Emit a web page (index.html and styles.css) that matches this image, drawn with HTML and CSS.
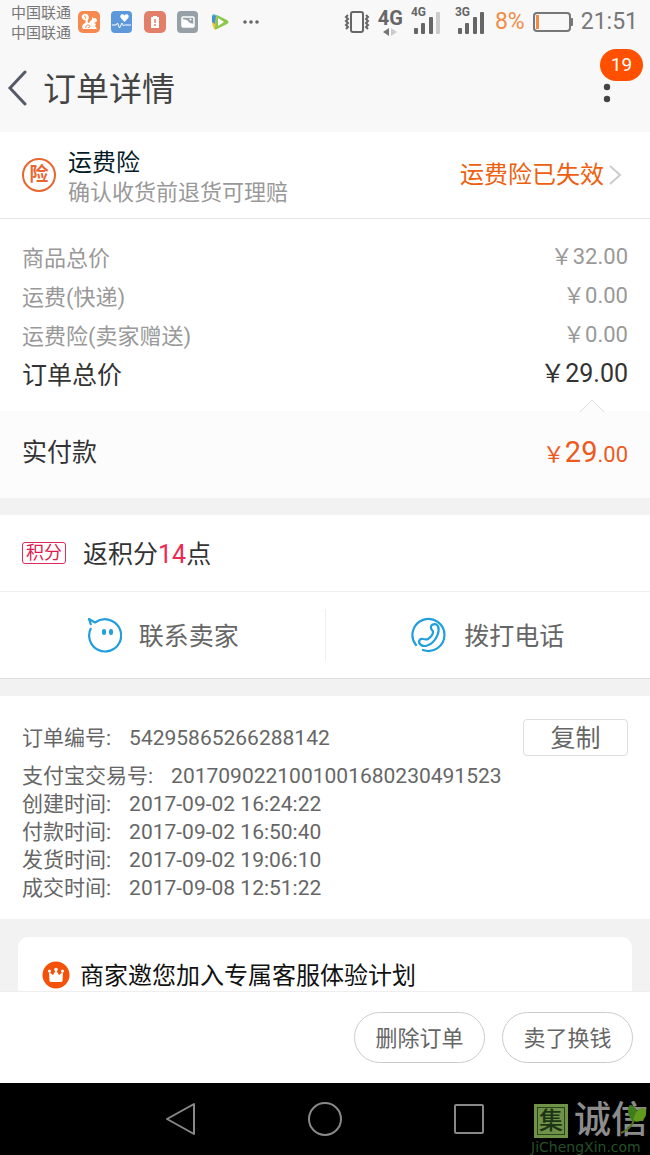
FILE: index.html
```html
<!DOCTYPE html>
<html lang="zh-CN">
<head>
    <meta charset="UTF-8">
    <meta name="viewport" content="width=device-width, initial-scale=1.0">
    <title>订单详情</title>
    <link rel="stylesheet" href="styles.css">
</head>
<body>
    <div class="status-bar">
        <div class="carriers">
            <span>中国联通</span>
            <span>中国联通</span>
        </div>
        <div class="app-icons">
            <svg width="22" height="22" viewBox="0 0 22 22">
                <rect width="22" height="22" rx="5" fill="#f7894e"/>
                <path d="M5 18c-2-3 0-5 2-6 2-2 0-3-1-3-3-1-3-5 0-6 4-1 6 3 4 6-1 2 0 3 1 3 1-2 2-3 3-3V6l2 1.500 1-.5c2 1 3 3 1 4l-2 1 2 1-1 2 2 3z" fill="#fff"/>
                <path d="M6 5c2 0 2 2 1 3" fill="none" stroke="#f7894e"/>
                <path d="M8 17c-1-3 3-4 4-2 0 2-2 2-2 1" fill="none" stroke="#f7894e"/>
            </svg>
            <svg width="22" height="22" viewBox="0 0 22 22">
                <rect width="21" height="22" rx="4" fill="#5c98da"/>
                <path d="M13.500 11 9.800 7C8 4 12 2 13.500 4.500 15 2 19 4 17.200 7z" fill="#fff"/>
                <path d="M1 14h4l1.500-2 2 5 2.500-5 1.500 3 1-1H20" fill="none" stroke="#fff"/>
            </svg>
            <svg width="22" height="22" viewBox="0 0 22 22">
                <rect width="22" height="22" rx="5" fill="#e37f69"/>
                <path d="M9 5h4v1h2v11H7V6h2z" fill="#fff"/>
                <path d="M11 8v4m0 1v2" stroke="#e37f69" stroke-width="1.500"/>
            </svg>
            <svg width="22" height="22" viewBox="0 0 22 22">
                <rect width="21" height="22" rx="4" fill="#96a0a6"/>
                <rect x="5" y="6" width="12" height="10" rx="1" fill="none" stroke="#fff" stroke-width="1.500"/>
                <path d="M5 8l5 1 3 3 4 1v3H5z" fill="#fff"/>
                <circle cx="13.500" cy="8.500" r="1" fill="#fff"/>
            </svg>
            <svg width="22" height="22" viewBox="0 0 22 22">
                <path d="M2 5q0-3 4-1l11 6-9 1z" fill="#4fb8d8"/>
                <path d="M2 5q2-1 5 1v11q-1 3-3 1-3-6-2-13z" fill="#f3c53b"/>
                <path d="M2 5q2-1 4 0l-1 8-3-2z" fill="#3f93d8"/>
                <path d="M7 4l10 5q3 2 0 4L7 18q-3 1-2-2z" fill="#8cc84b"/>
                <path d="M8 7v8l6-4z" fill="#fff"/>
            </svg>
            <svg class="dots" width="22" height="22" viewBox="0 0 22 22">
                <g fill="#666"><circle cx="5" cy="11" r="1.800"/><circle cx="11" cy="11" r="1.800"/><circle cx="17" cy="11" r="1.800"/></g>
            </svg>
        </div>
        <div class="system-icons">
            <svg width="26" height="24" viewBox="0 0 26 24" fill="none" stroke="#666">
                <rect x="7" y="2" width="12" height="20" rx="2" stroke-width="2"/>
                <path d="M4 5 2 7l2 2-2 2 2 2-2 2 2 2-2 2M22 5l2 2-2 2 2 2-2 2 2 2-2 2 2 2" stroke-width="2"/>
            </svg>
            <div class="network">
                <b>4G</b>
                <svg width="14" height="8" viewBox="0 0 14 8"><path d="M6 0v8L0 4z" fill="#777"/><path d="M8 0v8l6-4z" fill="#ccc"/></svg>
            </div>
            <div class="signal">
                <b>4G</b>
                <svg width="30" height="24" viewBox="0 0 30 24" fill="#666">
                    <rect x="3" y="18" width="4" height="6" rx="1"/><rect x="10" y="13" width="4" height="11" rx="1"/><rect x="18" y="7" width="4" height="17" rx="1"/><rect x="25" y="2" width="4" height="22" rx="1" fill="#ccc"/>
                </svg>
            </div>
            <div class="signal">
                <b>3G</b>
                <svg width="30" height="24" viewBox="0 0 30 24" fill="#666">
                    <rect x="3" y="18" width="4" height="6" rx="1"/><rect x="10" y="13" width="4" height="11" rx="1"/><rect x="18" y="7" width="4" height="17" rx="1"/><rect x="25" y="2" width="4" height="22" rx="1"/>
                </svg>
            </div>
            <span class="battery-level">8%</span>
            <svg width="40" height="20" viewBox="0 0 40 20">
                <rect x="1" y="1" width="36" height="18" rx="3" fill="none" stroke="#777" stroke-width="2"/>
                <rect x="37" y="6" width="3" height="8" rx="1" fill="#777"/>
                <rect x="3" y="3" width="3" height="14" fill="#f08c46"/>
            </svg>
            <span class="clock">21:51</span>
        </div>
    </div>

    <header class="title-bar">
        <button class="back" aria-label="返回">
            <svg width="22" height="36" viewBox="0 0 22 36"><path d="M19 2 4 18l15 16" fill="none" stroke="#555a68" stroke-width="3" stroke-linecap="round"/></svg>
        </button>
        <h1>订单详情</h1>
        <button class="more" aria-label="更多">
            <svg width="8" height="20" viewBox="0 0 8 20" fill="#444"><circle cx="4" cy="4" r="3.200"/><circle cx="4" cy="16" r="3.200"/></svg>
            <span class="badge">19</span>
        </button>
    </header>

    <main>
        <section class="insurance">
            <span class="insurance-icon">险</span>
            <div class="insurance-text">
                <h2>运费险</h2>
                <p>确认收货前退货可理赔</p>
            </div>
            <a class="insurance-state" href="#">运费险已失效
                <svg width="14" height="22" viewBox="0 0 14 22"><path d="M2 2l10 9-10 9" fill="none" stroke="#ccc" stroke-width="2"/></svg>
            </a>
        </section>

        <dl class="prices">
            <div><dt>商品总价</dt><dd>￥32.00</dd></div>
            <div><dt>运费(快递)</dt><dd>￥0.00</dd></div>
            <div><dt>运费险(卖家赠送)</dt><dd>￥0.00</dd></div>
            <div class="total"><dt>订单总价</dt><dd>￥29.00</dd></div>
        </dl>
        <section class="paid">
            <svg class="paid-arrow" width="26" height="13" viewBox="0 0 26 13"><path d="M1 13 13 1l12 12" fill="#fcfcfc" stroke="#ddd"/></svg>
            <span>实付款</span>
            <span class="paid-price">￥<strong>29</strong>.00</span>
        </section>

        <section class="points">
            <span class="points-tag">积分</span>
            <span class="points-text">返积分<em>14</em>点</span>
        </section>
        <div class="contact">
            <button>
                <svg width="36" height="36" viewBox="0 0 36 36" fill="none" stroke="#219fdd" stroke-width="2.200" stroke-linejoin="round">
                    <path d="M5 8 3 2l6 3.500C14 2 20 1 26 4a16 16 0 1 1-21 7"/>
                    <path d="M18 14v2M25 14v2" stroke-width="4" stroke-linecap="round"/>
                </svg>
                <span>联系卖家</span>
            </button>
            <button>
                <svg width="36" height="36" viewBox="0 0 36 36" fill="none" stroke="#219fdd" stroke-width="2.200" stroke-linecap="round" stroke-linejoin="round">
                    <path d="M5 28A16 16 0 1 1 12 33"/>
                    <path d="M20 11c-1-4 5-5 7-2 2 5-1 12-5 16-4 4-9 5-12 3-4-3-1-7 2-6 2 0 3 1 5 0 3-2 5-4 5-7 0-2-2-2-2-4z"/>
                </svg>
                <span>拨打电话</span>
            </button>
        </div>

        <section class="order-info">
            <div class="order-number">
                <span class="info-label">订单编号:</span>
                <span>54295865266288142</span>
                <button class="copy">复制</button>
            </div>
            <dl>
                <div><dt>支付宝交易号:</dt><dd>2017090221001001680230491523</dd></div>
                <div><dt>创建时间:</dt><dd>2017-09-02 16:24:22</dd></div>
                <div><dt>付款时间:</dt><dd>2017-09-02 16:50:40</dd></div>
                <div><dt>发货时间:</dt><dd>2017-09-02 19:06:10</dd></div>
                <div><dt>成交时间:</dt><dd>2017-09-08 12:51:22</dd></div>
            </dl>
        </section>

        <section class="invite">
            <svg width="28" height="28" viewBox="0 0 28 28">
                <circle cx="14" cy="14" r="13.500" fill="#f4510b"/>
                <path d="M7.500 20 7 11l4 3 3-5 3 5 4-3-.5 9q-.5 1-1.500 1H9q-1 0-1.500-1z" fill="#fff"/>
                <g fill="#fff"><circle cx="7.500" cy="10" r="1.600"/><circle cx="14" cy="8.500" r="1.800"/><circle cx="20.500" cy="10" r="1.600"/></g>
            </svg>
            <h2>商家邀您加入专属客服体验计划</h2>
        </section>
    </main>

    <footer class="actions">
        <button>删除订单</button>
        <button>卖了换钱</button>
    </footer>

    <nav class="nav-bar">
        <button aria-label="返回"><svg width="36" height="36" viewBox="0 0 36 36"><path d="M31 3v30L4 18z"/></svg></button>
        <button aria-label="主页"><svg width="36" height="36" viewBox="0 0 36 36"><circle cx="18" cy="18" r="16"/></svg></button>
        <button aria-label="最近任务"><svg width="36" height="36" viewBox="0 0 36 36"><rect x="4" y="4" width="28" height="28" rx="1"/></svg></button>
        <div class="watermark">
            <div class="watermark-name">
                <span class="watermark-seal">集</span>
                <span>诚信</span>
                <svg class="watermark-leaf" width="28" height="32" viewBox="0 0 28 32">
                    <path d="M14 18C8 14 8 4 11 2c3 0 6 3 7 6 3-3 7-3 9-1 1 7-3 13-13 11z" fill="#3f7d1c"/>
                    <path d="M14 18c1-5 3-9 4-10 3-3 7-3 9-1 1 7-3 13-13 11z" fill="#62991f"/>
                    <path d="M15 17q-3 9-13 13" fill="none" stroke="#55761f" stroke-width="2"/>
                </svg>
            </div>
            <span class="watermark-site">JiChengXin.com</span>
        </div>
    </nav>
</body>
</html>
```

FILE: styles.css
```css
* {
    box-sizing: border-box;
}
body {
    display: flex;
    flex-direction: column;
    height: 100vh;
    margin: 0;
    background-color: #f2f2f2;
    color: #333;
    font-family: Roboto, "Noto Sans CJK SC", sans-serif;
    font-size: 22px;
    font-weight: 400;
    line-height: 28px;
}
h1, h2, p, dl, dd {
    margin: 0;
    font-weight: 400;
}
button {
    padding: 0;
    border: none;
    background: none;
    color: #666;
    font: inherit;
    cursor: pointer;
}
svg {
    display: block;
    flex-shrink: 0;
}

/* status bar */
.status-bar {
    display: flex;
    align-items: center;
    height: 44px;
    padding: 0 12px 0 11px;
    background-color: #f8f8f8;
    color: #777;
}
.carriers {
    display: flex;
    flex-direction: column;
    padding-top: 2px;
    font-size: 15px;
    line-height: 20px;
}
.app-icons {
    display: flex;
    gap: 11px;
    margin-left: 7px;
}
.app-icons .dots {
    margin-left: -3px;
}
.system-icons {
    display: flex;
    align-items: center;
    gap: 8px;
    margin-left: auto;
}
.network {
    display: flex;
    flex-direction: column;
    align-items: center;
    font-size: 20px;
    line-height: 20px;
    color: #666;
}
.signal {
    position: relative;
}
.signal + .signal {
    margin: 0 2px 0 6px;
}
.signal b {
    position: absolute;
    top: -6px;
    left: 0;
    color: #666;
    font-size: 12px;
    line-height: 16px;
}
.battery-level {
    color: #f08c46;
    font-size: 23px;
}
.clock {
    font-size: 23px;
}

/* title */
.title-bar {
    display: flex;
    align-items: center;
    height: 88px;
    padding: 0 39px 0 6px;
    background-color: #f8f8f8;
}
.title-bar h1 {
    margin-left: 15px;
    padding-top: 3px;
    color: #444;
    font-size: 33px;
    line-height: 44px;
}
.more {
    position: relative;
    margin-left: auto;
    padding-top: 9px;
}
.badge {
    position: absolute;
    bottom: 22px;
    left: -3px;
    width: 43px;
    border-radius: 16px;
    background-color: #ff5000;
    color: #fff;
    font-size: 19px;
    line-height: 32px;
}

main {
    flex: 1;
    min-height: 0;
    overflow: hidden;
}
.insurance {
    display: flex;
    align-items: center;
    height: 87px;
    padding: 0 28px 0 22px;
    border-bottom: 1px solid #e5e5e5;
    background-color: #fff;
}
.insurance-icon {
    width: 34px;
    border: 2px solid #e8662f;
    border-radius: 50%;
    color: #e8662f;
    font-size: 19px;
    font-weight: 700;
    line-height: 30px;
    text-align: center;
}
.insurance-text {
    margin-left: 12px;
    padding-top: 5px;
}
.insurance-text h2 {
    color: #051b28;
    font-size: 24px;
    line-height: 30px;
}
.insurance-text p {
    color: #999;
    line-height: 30px;
}
.insurance-state {
    display: flex;
    align-items: center;
    gap: 4px;
    margin-left: auto;
    color: #ee6010;
    font-size: 24px;
    text-decoration: none;
}

/* prices */
.prices {
    padding: 20px 22px 16px;
    background-color: #fff;
    color: #999;
}
.prices div {
    display: flex;
    justify-content: space-between;
    line-height: 39px;
}
.prices dd {
    line-height: 35px;
}
.prices .total {
    color: #333;
    font-size: 25px;
}
.paid {
    position: relative;
    display: flex;
    align-items: center;
    justify-content: space-between;
    height: 87px;
    padding: 0 22px 3px;
    background-color: #fcfcfc;
    font-size: 25px;
}
.paid-arrow {
    position: absolute;
    top: -12px;
    right: 45px;
}
.paid-price {
    color: #ee5a1c;
    font-size: 22px;
}
.paid-price strong {
    font-size: 29px;
    font-weight: 400;
}

/* points and contact */
.points {
    display: flex;
    align-items: center;
    gap: 17px;
    height: 77px;
    margin-top: 17px;
    padding: 0 22px;
    border-bottom: 1px solid #eee;
    background-color: #fff;
    font-size: 25px;
}
.points-text {
    padding-top: 4px;
}
.points-tag {
    padding: 0 3px;
    border: 1px solid #dd2c5c;
    border-radius: 3px;
    color: #dd1c50;
    font-size: 18px;
    line-height: 20px;
}
.points em {
    color: #ee2850;
    font-style: normal;
}
.contact {
    display: flex;
    padding: 17px 0;
    border-bottom: 1px solid #ddd;
    background-color: #fff;
}
.contact button {
    display: flex;
    flex: 1;
    align-items: center;
    justify-content: center;
    gap: 17px;
    height: 52px;
    font-size: 25px;
}
.contact button + button {
    border-left: 1px solid #eee;
}
.contact span {
    padding-top: 4px;
}

/* order info */
.order-info {
    margin-top: 17px;
    padding: 23px 22px 17px;
    background-color: #fff;
    color: #666;
    font-size: 21px;
}
.order-number {
    display: flex;
    align-items: center;
    margin-bottom: 6px;
}
.info-label, .order-info dt {
    margin-right: 18px;
}
.copy {
    width: 105px;
    height: 37px;
    margin-left: auto;
    padding-top: 2px;
    border: 1px solid #ddd;
    border-radius: 4px;
    font-size: 25px;
    line-height: 33px;
}
.order-info dl div {
    display: flex;
}

.invite {
    display: flex;
    align-items: center;
    gap: 10px;
    margin: 18px 18px 0;
    padding: 23px 24px;
    border-radius: 10px;
    background-color: #fff;
}
.invite h2 {
    padding-top: 2px;
    color: #111;
    font-size: 24px;
}

/* bottom bars */
.actions {
    display: flex;
    align-items: center;
    justify-content: flex-end;
    gap: 17px;
    height: 92px;
    padding: 0 17px;
    border-top: 1px solid #eee;
    background-color: #fff;
}
.actions button {
    width: 131px;
    height: 51px;
    padding-top: 2px;
    border: 1px solid #ccc;
    border-radius: 26px;
}
.nav-bar {
    position: relative;
    display: flex;
    align-items: center;
    justify-content: center;
    gap: 108px;
    height: 72px;
    overflow: hidden;
    background-color: #000;
}
.nav-bar button svg {
    fill: none;
    stroke: #888;
    stroke-width: 2;
    stroke-linejoin: round;
}
.watermark {
    position: absolute;
    right: 0;
    bottom: 0;
    width: 119px;
    color: #8c8c8c;
}
.watermark-name {
    display: flex;
    align-items: center;
    gap: 6px;
    height: 36px;
    padding-left: 3px;
    font-size: 37px;
    font-weight: 500;
    line-height: 36px;
    white-space: nowrap;
}
.watermark-seal {
    width: 34px;
    flex-shrink: 0;
    border: 2px solid #6f9148;
    outline: 1px solid #29451c;
    outline-offset: -4px;
    background-color: #6f9148;
    color: #1c3414;
    font-size: 24px;
    line-height: 30px;
    text-align: center;
}
.watermark-leaf {
    position: absolute;
    top: 0;
    right: 3px;
}
.watermark-site {
    display: block;
    color: #245029;
    font-family: "DejaVu Sans", sans-serif;
    font-size: 14px;
    line-height: 16px;
}
```
